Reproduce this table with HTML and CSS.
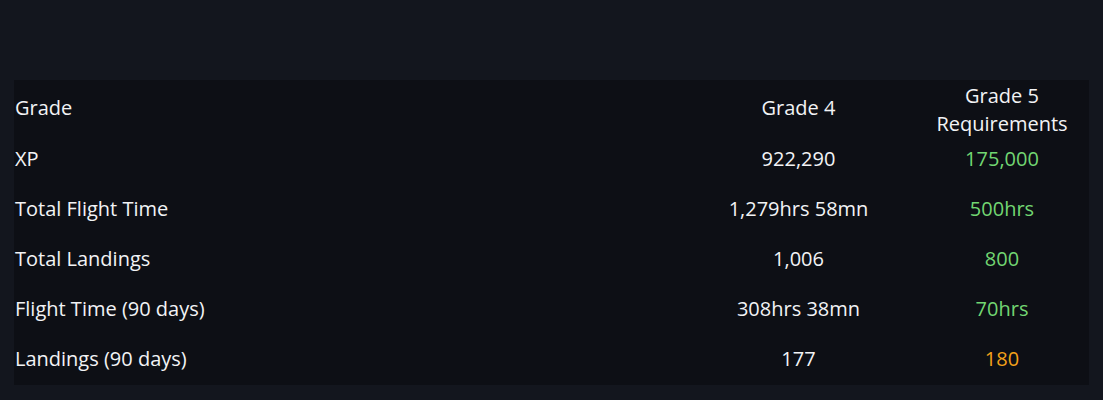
FILE: index.html
```html
<!DOCTYPE html>
<html>
<head>
<meta charset="utf-8">
<link rel="stylesheet" href="styles.css">
</head>
<body>
<div class="page">
  <div class="table">
    <div class="row head">
      <div class="label">Grade</div>
      <div class="val">Grade 4</div>
      <div class="val req">Grade 5<br>Requirements</div>
    </div>
    <div class="row">
      <div class="label">XP</div>
      <div class="val">922,290</div>
      <div class="val ok">175,000</div>
    </div>
    <div class="row">
      <div class="label">Total Flight Time</div>
      <div class="val">1,279hrs 58mn</div>
      <div class="val ok">500hrs</div>
    </div>
    <div class="row">
      <div class="label">Total Landings</div>
      <div class="val">1,006</div>
      <div class="val ok">800</div>
    </div>
    <div class="row">
      <div class="label">Flight Time (90 days)</div>
      <div class="val">308hrs 38mn</div>
      <div class="val ok">70hrs</div>
    </div>
    <div class="row">
      <div class="label">Landings (90 days)</div>
      <div class="val">177</div>
      <div class="val warn">180</div>
    </div>
  </div>
</div>
</body>
</html>
```

FILE: styles.css
```css
html, body {
  margin: 0;
  padding: 0;
  background: #13161e;
}
body {
  font-family: "Open Sans", "Noto Sans", "Liberation Sans", sans-serif;
  color: #f2f3f5;
  font-size: 20px;
  width: 1103px;
  height: 400px;
  overflow: hidden;
}
.page {
  padding: 80px 14px 0 14px;
}
.table {
  background: #0d0f15;
  padding-bottom: 2px;
}
.row {
  display: grid;
  grid-template-columns: 1fr 233px 174px;
  align-items: center;
  height: 50px;
}
.row.head {
  height: 53px;
  line-height: 28px;
}
.req {
  margin-top: 2px;
  margin-bottom: -2px;
}
.label {
  padding-left: 1px;
}
.val {
  text-align: center;
}
.ok {
  color: #72d672;
}
.warn {
  color: #f2a11a;
}
```
